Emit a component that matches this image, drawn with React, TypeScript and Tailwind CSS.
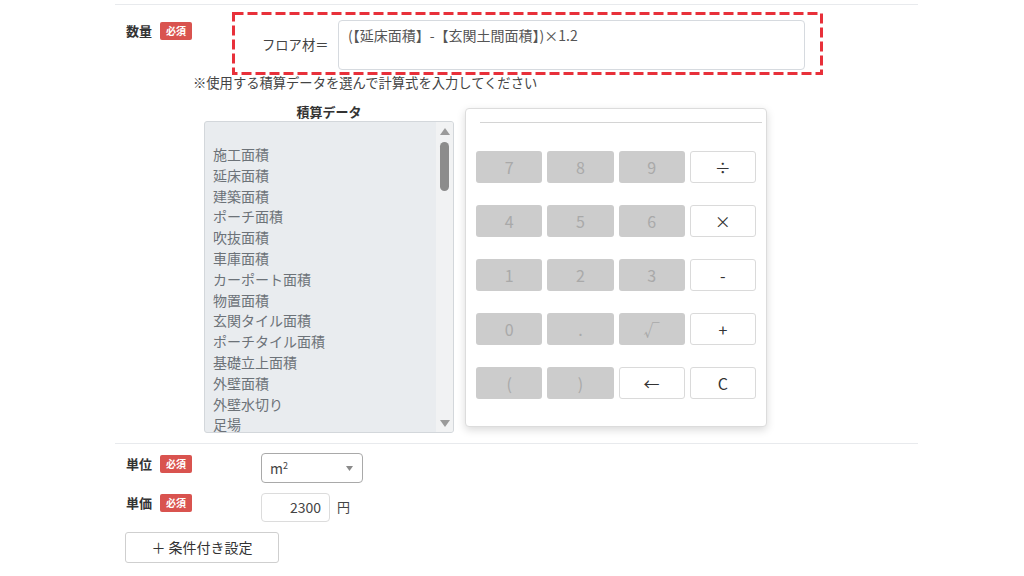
import React from 'react'

const ITEMS = [
  '施工面積',
  '延床面積',
  '建築面積',
  'ポーチ面積',
  '吹抜面積',
  '車庫面積',
  'カーポート面積',
  '物置面積',
  '玄関タイル面積',
  'ポーチタイル面積',
  '基礎立上面積',
  '外壁面積',
  '外壁水切り',
  '足場',
]

type Key = { label: string; enabled?: boolean }

const KEYS: Key[] = [
  { label: '7' }, { label: '8' }, { label: '9' }, { label: '÷', enabled: true },
  { label: '4' }, { label: '5' }, { label: '6' }, { label: '×', enabled: true },
  { label: '1' }, { label: '2' }, { label: '3' }, { label: '-', enabled: true },
  { label: '0' }, { label: '.' }, { label: '√' }, { label: '+', enabled: true },
  { label: '(' }, { label: ')' }, { label: '←', enabled: true }, { label: 'C', enabled: true },
]

function Required() {
  return (
    <span className="inline-flex h-[18px] w-[32px] items-center justify-center rounded-[2px] bg-[#d9534f] text-[10px] font-bold leading-none text-white">
      必須
    </span>
  )
}

function Triangle({ down }: { down?: boolean }) {
  return (
    <svg width="10" height="7" viewBox="0 0 10 7">
      <path d={down ? 'M0 0 L10 0 L5 7 Z' : 'M0 7 L10 7 L5 0 Z'} fill="#9a9a9a" />
    </svg>
  )
}

export default function App() {
  return (
    <div className="h-[576px] w-[1024px] overflow-hidden bg-white font-['Noto_Sans_CJK_JP','Noto_Sans',sans-serif] text-[#333]">
      <div className="ml-[115px] w-[803px] pt-[4px]">
        {/* 数量 */}
        <div className="flex border-t border-[#e8eaed]">
          <div className="flex w-[78px] shrink-0 items-center gap-[8px] pl-[11px] pt-[17px] self-start">
            <span className="text-[13px] font-bold leading-[18px]">数量</span>
            <Required />
          </div>

          <div className="flex-1">
            <div className="relative ml-[39px] mt-[7px] h-[63px] w-[591px]">
              <svg className="pointer-events-none absolute inset-0" width="591" height="63">
                <rect x="1.5" y="1.5" width="588" height="60" fill="none" stroke="#e8303a" strokeWidth="3" strokeDasharray="10 4" />
              </svg>
              <div className="flex items-start pt-[8px]">
                <span className="ml-[30px] mt-[16px] w-[76px] text-[13.3px] leading-[18px] text-[#444]">フロア材＝</span>
                <div className="h-[50px] w-[467px] rounded-[4px] border border-[#d6dadf] px-[9px] pt-[4px] text-[14px] leading-[20px] text-[#555]">
                  (【延床面積】-【玄関土間面積】)×1.2
                </div>
              </div>
            </div>

            <p className="-mt-[1px] text-[13.3px] leading-[18px] text-[#444]">※使用する積算データを選んで計算式を入力してください</p>

            <div className="mt-[11px] flex items-start">
              {/* 積算データ */}
              <div className="ml-[11px] w-[250px]">
                <p className="text-center text-[13px] font-bold leading-[18px]">積算データ</p>
                <div className="flex h-[312px] overflow-hidden rounded-[3px] border border-[#d3d7db] bg-[#e9ecef]">
                  <div className="flex-1 pl-[8px] pt-[1px] text-[14px] leading-[20.8px] text-[#6c7278]">
                    <div className="h-[21px]" />
                    {ITEMS.map((item) => (
                      <div key={item}>{item}</div>
                    ))}
                  </div>
                  <div className="flex w-[17px] flex-col items-center bg-[#f1f2f3]">
                    <div className="mt-[6px]">
                      <Triangle />
                    </div>
                    <div className="mt-[7px] h-[49px] w-[9px] rounded-full bg-[#8c8c8c]" />
                    <div className="flex-1" />
                    <div className="mb-[5px]">
                      <Triangle down />
                    </div>
                  </div>
                </div>
              </div>

              {/* 電卓 */}
              <div className="ml-[11px] mt-[5px] h-[319px] w-[302px] rounded-[4px] border border-[#dcdcdc] bg-white shadow-[0_3px_8px_rgba(0,0,0,0.15)]">
                <div className="ml-[14px] mr-[4px] h-[14px] border-b border-[#d4d4d4]" />
                <div className="mx-[10px] mt-[28px] grid grid-cols-4 gap-x-[5px] gap-y-[22px]">
                  {KEYS.map((k) => (
                    <div
                      key={k.label}
                      className={
                        k.enabled
                          ? 'flex h-[32px] items-center justify-center rounded-[3px] border border-[#dadada] bg-white text-[16px] text-[#333]'
                          : 'flex h-[32px] items-center justify-center rounded-[3px] bg-[#cccccc] text-[16px] text-[#a9a9a9]'
                      }
                    >
                      {k.label}
                    </div>
                  ))}
                </div>
              </div>
            </div>
          </div>
        </div>

        <div className="mt-[10px] border-t border-[#e8eaed]" />

        {/* 単位 */}
        <div className="mt-[9px] flex items-start">
          <div className="flex w-[146px] shrink-0 items-center gap-[8px] pl-[11px] pt-[2px]">
            <span className="text-[13px] font-bold leading-[18px]">単位</span>
            <Required />
          </div>
          <div className="flex h-[30px] w-[102px] items-center justify-between rounded-[4px] border border-[#a9a9a9] pl-[8px] pr-[9px] text-[14px] text-[#444]">
            <span>
              m<sup className="text-[9px]">2</sup>
            </span>
            <svg width="7" height="5" viewBox="0 0 7 5">
              <path d="M0 0 L7 0 L3.5 5 Z" fill="#8a8a8a" />
            </svg>
          </div>
        </div>

        {/* 単価 */}
        <div className="mt-[10px] flex items-start">
          <div className="flex w-[146px] shrink-0 items-center gap-[8px] pl-[11px] pt-[1px]">
            <span className="text-[13px] font-bold leading-[18px]">単価</span>
            <Required />
          </div>
          <div className="flex h-[29px] w-[69px] items-center justify-end rounded-[4px] border border-[#dcdcdc] pr-[8px] text-[14px] text-[#444]">
            2300
          </div>
          <span className="ml-[7px] mt-[5px] text-[13px] leading-[18px] text-[#444]">円</span>
        </div>

        <button className="ml-[10px] mt-[10px] flex h-[31px] w-[154px] items-center justify-center rounded-[3px] border border-[#cfcfcf] bg-white text-[14px] text-[#333]">
          ＋ 条件付き設定
        </button>
      </div>
    </div>
  )
}
